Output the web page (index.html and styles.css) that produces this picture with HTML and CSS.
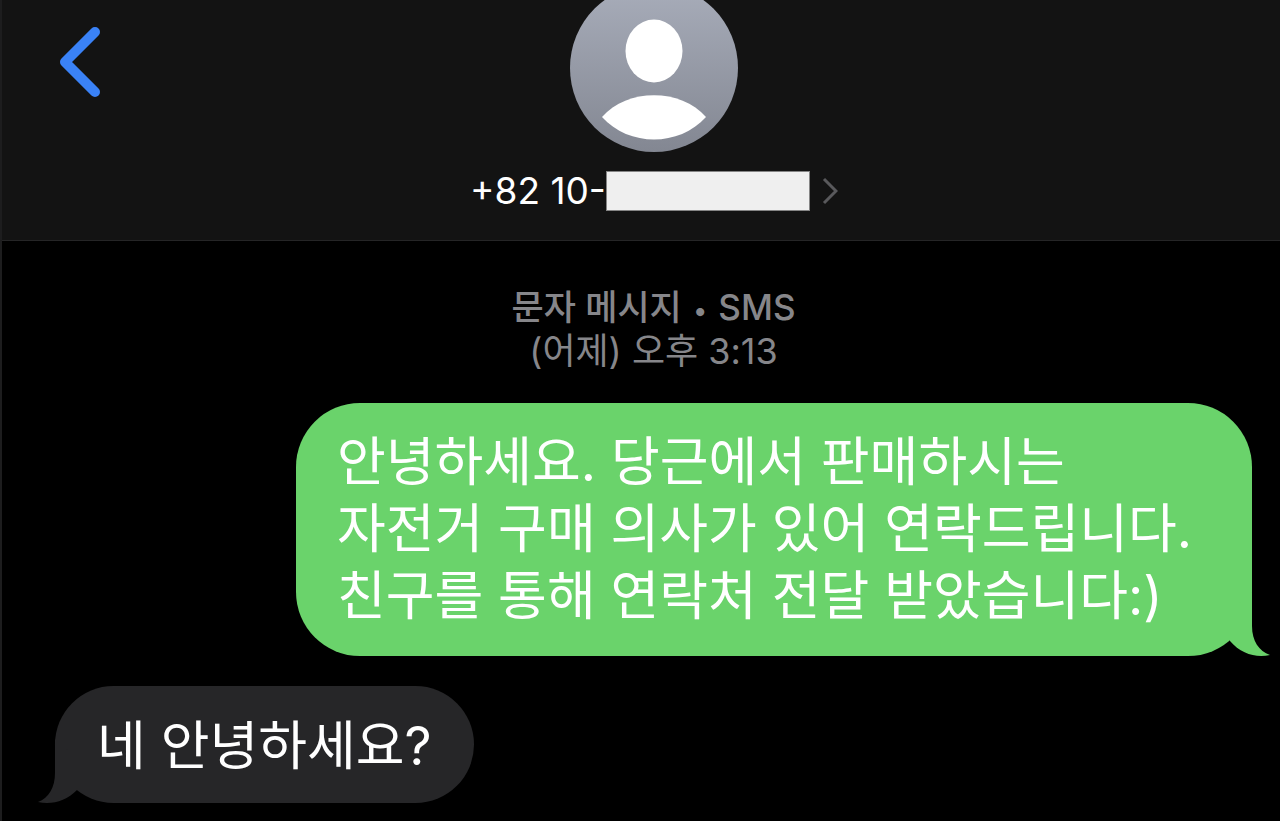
FILE: index.html
```html
<!DOCTYPE html>
<html lang="ko">
<head>
<meta charset="utf-8">
<meta name="viewport" content="width=device-width, initial-scale=1">
<title>메시지</title>
<link rel="stylesheet" href="styles.css">
</head>
<body>
<header class="header">
  <button class="back" type="button" aria-label="뒤로">
    <svg width="44" height="72" viewBox="0 0 44 72"><path d="M39 6 9 36 39 66" fill="none" stroke="#3a82f7" stroke-width="10" stroke-linecap="round" stroke-linejoin="round"/></svg>
  </button>
  <div class="contact">
    <svg class="avatar" width="168" height="168" viewBox="0 0 168 168" aria-hidden="true">
      <defs><linearGradient id="shade" x1="0" y1="0" x2="0" y2="1"><stop offset="0" stop-color="#a8adba"/><stop offset="1" stop-color="#838792"/></linearGradient></defs>
      <circle cx="84" cy="84" r="84" fill="url(#shade)"/>
      <ellipse cx="84" cy="67" rx="28.500" ry="31.500" fill="#fff"/>
      <path d="M32 133C57 104 111 104 136 133C109 163 59 163 32 133Z" fill="#fff"/>
    </svg>
    <button class="number" type="button">
      <span>+82 10-</span><span class="mask"></span>
      <svg class="chevron" width="16" height="28" viewBox="0 0 16 28"><path d="M2 2 14 14 2 26" fill="none" stroke="#59595c" stroke-width="3"/></svg>
    </button>
  </div>
</header>
<main class="thread">
  <p class="stamp"><span class="kind">문자 메시지 <span class="dot">•</span> SMS</span><br>(어제) 오후 3:13</p>
  <div class="bubble sent">안녕하세요. 당근에서 판매하시는<br>자전거 구매 의사가 있어 연락드립니다.<br>친구를 통해 연락처 전달 받았습니다:)
    <svg class="tail" width="44" height="64" viewBox="0 0 44 64" aria-hidden="true"><path d="M26 0V34C26 49 33 59 44 63C30 66 15 62 4 49V20Z" fill="#6ad36b"/></svg>
  </div>
  <div class="bubble received">네 안녕하세요?
    <svg class="tail" width="44" height="64" viewBox="0 0 44 64" aria-hidden="true"><path d="M18 0V34C18 48 12 59 1 63C15 66 29 62 40 51V20Z" fill="#262628"/></svg>
  </div>
</main>
</body>
</html>
```
FILE: styles.css
```css
* { box-sizing: border-box; }
body {
  margin: 0;
  min-height: 100vh;
  background: #000;
  color: #fff;
  border-left: 2px solid #1d1d1e;
  font-family: Inter, "Noto Sans CJK KR", sans-serif;
}
button { border: 0; padding: 0; background: none; color: inherit; font: inherit; }
.header {
  display: grid;
  grid-template-columns: 120px 1fr 94px;
  height: 241px;
  background: #131313;
  border-bottom: 1px solid #252526;
  overflow: hidden;
}
.back { align-self: start; justify-self: start; margin: 26px 0 0 54px; height: 72px; }
.back svg, .avatar { display: block; }
.contact { display: flex; flex-direction: column; align-items: center; margin-top: -16px; }
.number {
  display: flex;
  align-items: center;
  height: 40px;
  margin-top: 19px;
  font-size: 37px;
  line-height: 40px;
}
.mask { width: 204px; height: 40px; background: #efefef; border: 1px solid #858585; }
.chevron { margin-left: 12px; }
.thread { display: flex; flex-direction: column; padding: 44px 28px 18px 53px; }
.stamp {
  align-self: center;
  margin: 0 0 30px;
  color: #86868a;
  font-size: 36px;
  line-height: 44px;
  text-align: center;
}
.kind { font-size: 35px; font-weight: 500; }
.dot { margin: 0 2px; font-size: 26px; line-height: 24px; }
.bubble { position: relative; font-size: 53px; line-height: 67px; white-space: nowrap; }
.sent {
  align-self: flex-end;
  padding: 26px 60px 26px 41px;
  border-radius: 64px;
  background: #6ad36b;
}
.received {
  align-self: flex-start;
  margin-top: 30px;
  padding: 27px 42px 23px;
  border-radius: 59px;
  background: #262628;
}
.tail { position: absolute; bottom: 0; }
.sent .tail { right: -18px; }
.received .tail { left: -18px; }
```
